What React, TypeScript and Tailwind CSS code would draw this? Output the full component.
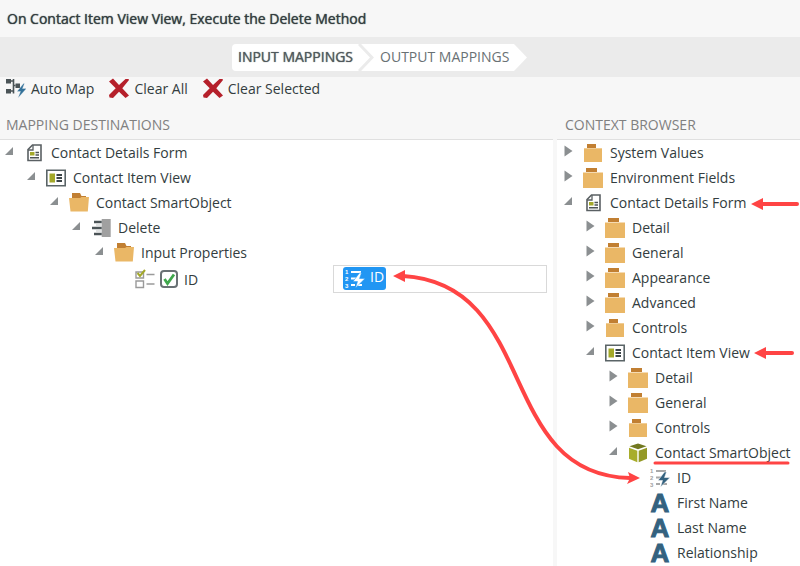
import React, { useState } from 'react';
import clsx from 'clsx';

type IconName = 'form' | 'view' | 'folderOpen' | 'folder' | 'folderSmall' | 'method' | 'cube' | 'number' | 'text';

interface TreeNode {
  label: string;
  icon: IconName;
  level: number;
  state?: 'open' | 'closed';
}

const INDENT = ['pl-[5px]', 'pl-[27px]', 'pl-[50px]', 'pl-[72px]', 'pl-[95px]'];

const destinations: TreeNode[] = [
  { label: 'Contact Details Form', icon: 'form', level: 0, state: 'open' },
  { label: 'Contact Item View', icon: 'view', level: 1, state: 'open' },
  { label: 'Contact SmartObject', icon: 'folderOpen', level: 2, state: 'open' },
  { label: 'Delete', icon: 'method', level: 3, state: 'open' },
  { label: 'Input Properties', icon: 'folderOpen', level: 4, state: 'open' },
];

const context: TreeNode[] = [
  { label: 'System Values', icon: 'folderSmall', level: 0, state: 'closed' },
  { label: 'Environment Fields', icon: 'folder', level: 0, state: 'closed' },
  { label: 'Contact Details Form', icon: 'form', level: 0, state: 'open' },
  { label: 'Detail', icon: 'folder', level: 1, state: 'closed' },
  { label: 'General', icon: 'folder', level: 1, state: 'closed' },
  { label: 'Appearance', icon: 'folder', level: 1, state: 'closed' },
  { label: 'Advanced', icon: 'folder', level: 1, state: 'closed' },
  { label: 'Controls', icon: 'folderSmall', level: 1, state: 'closed' },
  { label: 'Contact Item View', icon: 'view', level: 1, state: 'open' },
  { label: 'Detail', icon: 'folder', level: 2, state: 'closed' },
  { label: 'General', icon: 'folder', level: 2, state: 'closed' },
  { label: 'Controls', icon: 'folderSmall', level: 2, state: 'closed' },
  { label: 'Contact SmartObject', icon: 'cube', level: 2, state: 'open' },
  { label: 'ID', icon: 'number', level: 3 },
  { label: 'First Name', icon: 'text', level: 3 },
  { label: 'Last Name', icon: 'text', level: 3 },
  { label: 'Relationship', icon: 'text', level: 3 },
];

const NumberIcon: React.FC<{ light?: boolean }> = ({ light }) => (
  <svg width="20" height="20" viewBox="0 0 20 20" className="shrink-0" aria-hidden="true">
    <g fill={light ? '#fff' : '#a0a0a0'} fontFamily="Liberation Sans, sans-serif" fontSize="6" fontWeight="700">
      <text x="0" y="5">1</text>
      <text x="0" y="12">2</text>
      <text x="0" y="19">3</text>
    </g>
    <path d="M6 3h10M6 9.500h5M6 16h4M13 16h4" stroke={light ? '#fff' : '#a8a8a8'} strokeWidth="2" />
    <path
      d="M14.500 4L8 12.500h4.500l-2 6.500L20 9.500h-5.500l2-5.500z"
      fill={light ? '#fff' : '#34627f'}
      stroke={light ? '#2196f3' : '#fff'}
      strokeWidth="0.500"
    />
  </svg>
);

const NodeIcon: React.FC<{ name: IconName }> = ({ name }) => {
  if (name === 'number') return <NumberIcon />;
  if (name === 'text') {
    return (
      <span
        className="w-5 h-5 shrink-0 flex items-center justify-center font-['Liberation_Sans',sans-serif] text-[26px] leading-[22px] font-bold text-[#34627f] [-webkit-text-stroke:1px_#34627f]"
        aria-hidden="true"
      >
        A
      </span>
    );
  }
  return (
    <svg width="20" height="20" viewBox="0 0 20 20" className="shrink-0" aria-hidden="true">
      {name === 'form' && (
        <>
          <path d="M8.500 2H17v15.500H4V6.500z" fill="#fff" stroke="#5a6063" strokeWidth="1.600" />
          <path d="M4 7h5V2" fill="none" stroke="#5a6063" strokeWidth="1.300" />
          <path d="M6 9h4.500v3.500H6z" fill="#a3a829" />
          <path d="M11.500 9.500H15M11.500 12H15M6 14.800h9" stroke="#4d5356" strokeWidth="1.400" />
        </>
      )}
      {name === 'view' && (
        <>
          <path d="M0.800 2.300h18.400v15.400H0.800z" fill="#fff" stroke="#5a6467" strokeWidth="1.600" />
          <path d="M3.500 5.500h5.500v9h-5.500z" fill="#a3a829" />
          <path d="M10.500 7h5.500M10.500 10h5.500M10.500 13h5.500" stroke="#3c4548" strokeWidth="1.800" />
        </>
      )}
      {name === 'folderOpen' && (
        <>
          <path d="M3 0h8l1.500 3H17v5H3z" fill="#c17f32" />
          <path d="M0 5h11l1.500-1H20l-1.200 14.500H1.500z" fill="#eab766" />
        </>
      )}
      {name === 'folder' && (
        <>
          <path d="M3 0h11v4H3z" fill="#c17f32" />
          <path d="M0 4.500h20V20H0z" fill="#eab766" />
        </>
      )}
      {name === 'folderSmall' && (
        <>
          <path d="M4 1h9v4H4z" fill="#c17f32" />
          <path d="M1 5.300h18V19H1z" fill="#eab766" />
        </>
      )}
      {name === 'method' && (
        <>
          <path d="M10.700 1h9v18h-9z" fill="#a0a0a0" />
          <path d="M3 4h7.700M1 10h9.700M3 16h7.700" stroke="#4b5457" strokeWidth="2.600" />
          <path d="M5 7h5.700M5 13h5.700" stroke="#c4c7c8" strokeWidth="1.200" />
        </>
      )}
      {name === 'cube' && (
        <>
          <path d="M10 0.500l8.500 2.800L10 6.300 1.500 3.300z" fill="#727820" />
          <path d="M1 4.800l8.300 3v11.400L1 15.700z" fill="#a8ad2b" />
          <path d="M19 4.800l-8.300 3v11.400l8.300-3.500z" fill="#949926" />
        </>
      )}
    </svg>
  );
};

const Toggle: React.FC<{ node: TreeNode }> = ({ node }) => {
  if (!node.state) return <span className="w-[9px] shrink-0" />;
  return (
    <button
      type="button"
      className="w-[9px] h-5 shrink-0 flex items-start pt-0.5"
      aria-label={(node.state === 'open' ? 'Collapse ' : 'Expand ') + node.label}
    >
      <svg width="9" height="12" viewBox="0 0 9 12" aria-hidden="true">
        <path d={node.state === 'open' ? 'M8 2v8H0z' : 'M0.500 0.500L8.500 6l-8 5.500z'} fill="#8b8f91" />
      </svg>
    </button>
  );
};

const TreeRow: React.FC<{ node: TreeNode }> = ({ node }) => (
  <li className={clsx('h-[25px] flex items-center whitespace-nowrap', INDENT[node.level])}>
    <Toggle node={node} />
    <span className="ml-2.5 mr-[7px] flex">
      <NodeIcon name={node.icon} />
    </span>
    <span>{node.label}</span>
  </li>
);

const ClearIcon = () => (
  <svg width="20" height="20" viewBox="0 0 20 20" className="shrink-0" aria-hidden="true">
    <path d="M4 0.500L10 7 16.500 1H19.500L20 2 13.300 10.200 20 17.500 16.500 20 10 13.800 4 20 0.500 19.500 0 17 6.700 10.200 0 3.500z" fill="#b5202b" />
  </svg>
);

const AutoMapIcon = () => (
  <svg width="20" height="20" viewBox="0 0 20 20" className="shrink-0" aria-hidden="true">
    <path d="M0 1h5v4.500H0zM0 11h5v4.500H0zM9.500 5.500h4.500v4.500H9.500z" fill="#4b5457" />
    <path d="M7.500 1v14.500M5 3h2.500M5 13h2.500M7.500 7.500h2" fill="none" stroke="#4b5457" strokeWidth="1.600" />
    <path d="M17.500 5.500L11 13.500h3.500L12 20l8.500-9.500h-4l2-5z" fill="#34729a" stroke="#f7f7f7" strokeWidth="0.300" />
  </svg>
);

const ToolButton: React.FC<{ icon: React.ReactNode; label: string }> = ({ icon, label }) => (
  <button type="button" className="flex items-center gap-[5px] whitespace-nowrap">
    {icon}
    <span>{label}</span>
  </button>
);

const App: React.FC = () => {
  const [checked, setChecked] = useState(true);

  return (
    <div className="relative min-h-screen flex flex-col bg-[#f7f7f7] text-[#333d40] text-sm leading-[25px] font-['Open_Sans',sans-serif]">
      <header className="h-[37px] flex items-center px-[7px]">
        <h1 className="[text-shadow:0_0_1px_currentColor]">On Contact Item View View, Execute the Delete Method</h1>
      </header>

      {/* Wizard steps */}
      <nav className="h-10 bg-[#ebebeb] flex items-start pt-[7px] pl-[232px]">
        <button type="button" className="h-[27px] bg-white rounded-l-sm pl-1.5 pr-[5px] pb-0.5 text-[#50595c] [text-shadow:0_0_1px_currentColor]">
          INPUT MAPPINGS
        </button>
        <svg width="16" height="27" viewBox="0 0 16 27" className="bg-white" aria-hidden="true">
          <path d="M1 0L14 13.500 1 27" fill="none" stroke="#ebebeb" strokeWidth="3" />
        </svg>
        <button type="button" className="h-[27px] bg-white pl-1.5 pr-[5px] pb-0.5 text-[#697174]">
          OUTPUT MAPPINGS
        </button>
        <svg width="13" height="27" viewBox="0 0 13 27" aria-hidden="true">
          <path d="M0 0l13 13.500L0 27z" fill="#fff" />
        </svg>
      </nav>

      {/* Toolbar */}
      <div className="h-[22px] flex items-center gap-[15px] px-1.5">
        <ToolButton icon={<AutoMapIcon />} label="Auto Map" />
        <ToolButton icon={<ClearIcon />} label="Clear All" />
        <ToolButton icon={<ClearIcon />} label="Clear Selected" />
      </div>

      <main className="flex-1 flex gap-1">
        <section className="flex-1 flex flex-col">
          <h2 className="h-[41px] flex items-center pt-2.5 px-1.5 border-b border-[#e0e0e0] text-[#808080]">MAPPING DESTINATIONS</h2>
          <div className="flex-1 bg-white">
            <ul>
              {destinations.map((node) => (
                <TreeRow key={node.label} node={node} />
              ))}
              <li className="flex">
                <div className="w-[333px] h-7 flex items-center pl-[135px]">
                  <svg width="20" height="20" viewBox="0 0 20 20" aria-hidden="true">
                    <path d="M1 3h7.500v6H1zM1 12h7.500v6.500H1z" fill="#fff" stroke="#9a9a9a" strokeWidth="1.400" />
                    <path d="M11.500 5.500h8M11.500 15h8" stroke="#9a9a9a" strokeWidth="1.400" />
                    <path d="M2.500 4l2.500 3L10 1" fill="none" stroke="#a3a829" strokeWidth="2" />
                  </svg>
                  <label className="ml-[5px] flex items-center gap-1.5">
                    <span className="grid">
                      <input
                        type="checkbox"
                        checked={checked}
                        onChange={(e) => setChecked(e.target.checked)}
                        className="col-start-1 row-start-1 appearance-none w-[18px] h-[18px] bg-white border-2 border-[#697174] rounded-sm"
                      />
                      {checked && (
                        <svg width="18" height="18" viewBox="0 0 18 18" className="col-start-1 row-start-1 pointer-events-none" aria-hidden="true">
                          <path d="M4.500 9l3 4.500L14 4.500" fill="none" stroke="#3fa74c" strokeWidth="2.800" />
                        </svg>
                      )}
                    </span>
                    ID
                  </label>
                </div>
                <div className="flex-1 mr-1.5 h-7 pl-[9px] flex items-start pt-px border border-[#d9d9d9]">
                  <span className="h-[23px] flex items-center gap-[5px] px-0.5 rounded-[3px] bg-[#2196f3] text-white">
                    <NumberIcon light />
                    <span className="self-start leading-5">ID</span>
                  </span>
                </div>
              </li>
            </ul>
          </div>
        </section>

        <section className="w-[243px] shrink-0 flex flex-col">
          <h2 className="h-[41px] flex items-center pt-2.5 px-2 border-b border-[#e0e0e0] text-[#808080]">CONTEXT BROWSER</h2>
          <div className="flex-1 bg-white pl-0.5">
            <ul>
              {context.map((node, i) => (
                <TreeRow key={i} node={node} />
              ))}
            </ul>
          </div>
        </section>
      </main>

      {/* Callout arrows over the panels */}
      <svg width="800" height="566" viewBox="0 0 800 566" className="absolute top-0 right-0 pointer-events-none" aria-hidden="true">
        <g fill="none" stroke="#ff4444" strokeLinecap="round">
          <path d="M403 276C540 284 495 475 630 478" strokeWidth="4" />
          <path d="M762 204h35M764 353h28" strokeWidth="4" />
          <path d="M655 463h133" strokeWidth="3" />
        </g>
        <path
          d="M393 276l12-6v12zM640 478l-13 6 3-6-2-6zM751 204l12-6v12zM754 353l12-6v12z"
          fill="#ff4444"
        />
      </svg>
    </div>
  );
};

export default App;
